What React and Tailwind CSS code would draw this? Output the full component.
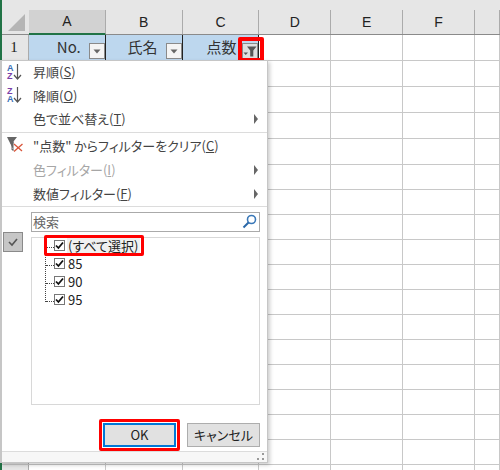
import React from 'react';

const colWidths = ['w-[77px]', 'w-[77px]', 'w-[77px]', 'w-[72px]', 'w-[72px]', 'w-[72px]', 'w-[25px]'];
const colNames = ['A', 'B', 'C', 'D', 'E', 'F', ''];
const rowNums = Array.from({ length: 18 }, (_, i) => i);
const jp = { fontFamily: '"Noto Sans CJK JP", "Liberation Sans", sans-serif' };

function DropArrow({ filtered }) {
    return (
        <svg width="14" height="14" viewBox="0 0 14 14">
            {filtered ? (
                <>
                    <path d="M0.5 8.5h4.5L2.7 11z" fill="#555" />
                    <path d="M4 2.5h9.5l-3.2 4v6H7.2v-6z" fill="#555" />
                </>
            ) : (
                <path d="M3.5 5.5h7L7 9.5z" fill="#666" />
            )}
        </svg>
    );
}

function SortIcon({ top, bottom }) {
    return (
        <div className="relative w-[16px] h-[16px] text-[9px] leading-[8px] font-bold text-[#7a3fa8]" style={{ fontFamily: '"Liberation Sans", sans-serif' }}>
            <div className={`w-[7px] ${top === 'A' ? 'text-[#3a6fb5]' : ''}`}>{top}</div>
            <div className={`w-[7px] ${bottom === 'A' ? 'text-[#3a6fb5]' : ''}`}>{bottom}</div>
            <svg className="absolute left-[6px] top-0" width="9" height="16" viewBox="0 0 9 16">
                <path d="M4.5 0v15M1 11l3.5 4 3.5-4" fill="none" stroke="#555" strokeWidth="1.2" />
            </svg>
        </div>
    );
}

function ClearIcon() {
    return (
        <svg width="17" height="17" viewBox="0 0 17 17" className="overflow-visible">
            <path d="M0 0h10L6.5 4.5V12H5V13H6.5M3.5 4.5L0 0" fill="#666" />
            <path d="M3.5 4.5h3v2h-3z" fill="#666" />
            <path d="M5 6v7h2" fill="none" stroke="#666" strokeWidth="1" />
            <path d="M7 7l8 7M15.5 7l-8.5 7.5" stroke="#d9553a" strokeWidth="1.3" fill="none" />
        </svg>
    );
}

function MenuRow({ icon, children, arrow, disabled, short }) {
    return (
        <div className={`flex items-center ${short ? 'h-[23.5px]' : 'h-[24px]'} ${disabled ? 'text-[#a6a6a6]' : 'text-[#444]'}`}>
            <div className="w-[31px] pl-[5px] shrink-0">{icon}</div>
            <div className="flex-1 text-[13px] whitespace-nowrap">{children}</div>
            {arrow && <div className="w-0 h-0 mr-[9px] border-y-[5px] border-y-transparent border-l-[4px] border-l-[#666]" />}
        </div>
    );
}

function TreeRow({ label, first }) {
    return (
        <div className="flex items-center h-[18px] pl-[22px]">
            <div className="w-[11px] h-[11px] border border-[#777] bg-white flex items-center justify-center shrink-0">
                <svg width="9" height="9" viewBox="0 0 9 9">
                    <path d="M1 4.5l2.4 2.5L8 1.5" fill="none" stroke="#111" strokeWidth="1.8" />
                </svg>
            </div>
            <span className={`ml-[2px] pl-[1px] text-[13px] text-[#222] whitespace-nowrap ${first ? 'bg-[#f0f0f0] pr-[2px]' : ''}`}>{label}</span>
        </div>
    );
}

export default function App() {
    return (
        <div className="relative w-[500px] h-[470px] overflow-hidden bg-white [font-feature-settings:'palt']" style={jp}>
            <div className="h-[10px] bg-[#e6e6e6]" />
            {/* column headers */}
            <div className="flex h-[25px] bg-[#e6e6e6] border-b border-[#8a8a8a]">
                <div className="w-[29px] flex items-end justify-end pr-[4px] pb-[3px]">
                    <div className="w-0 h-0 border-l-[17px] border-l-transparent border-b-[17px] border-b-[#b5b5b5]" />
                </div>
                {colNames.map((name, i) => (
                    <div
                        key={i}
                        className={`${colWidths[i]} flex items-center justify-center text-[14px] text-[#222] border-r border-[#ababab] ${i === 0 ? 'bg-[#d2d2d2] border-b-2 border-b-[#217346] h-[25px] text-[#1d5c3a]' : ''}`}
                        style={{ fontFamily: '"Liberation Sans", sans-serif' }}
                    >
                        {name}
                    </div>
                ))}
            </div>
            {/* sheet rows */}
            {rowNums.map((r) => (
                <div key={r} className={`flex ${r < 5 ? 'h-[26px]' : 'h-[25px]'} border-b border-[#c8c8c8]`}>
                    <div className="w-[29px] flex items-center justify-center bg-[#e6e6e6] border-r border-[#ababab] text-[15px] text-[#222]" style={{ fontFamily: '"Liberation Serif", serif' }}>
                        {r === 0 ? '1' : ''}
                    </div>
                    {r === 0 ? (
                        <>
                            {[['No.', false], ['氏名', false], ['点数', true]].map(([label, filtered]) => (
                                <div key={label} className="w-[77px] flex items-end justify-end pb-[1px] bg-[#bdd7ee] border-r border-[#222] text-[15px] text-[#333]">
                                    <span className={`self-center ${filtered ? 'mr-[6px]' : 'mr-[8px]'}`}>{label}</span>
                                    <div className={`w-[16px] h-[16px] border border-[#8a8a8a] flex items-center justify-center ${filtered ? 'bg-[#dedede]' : 'bg-[#f4f4f4]'}`}>
                                        <DropArrow filtered={filtered} />
                                    </div>
                                </div>
                            ))}
                        </>
                    ) : (
                        colWidths.slice(0, 3).map((w, i) => <div key={i} className={`${w} border-r border-[#c8c8c8]`} />)
                    )}
                    {colWidths.slice(3).map((w, i) => (
                        <div key={i} className={`${w} border-r border-[#c8c8c8]`} />
                    ))}
                </div>
            ))}

            {/* sheet edge */}
            <div className="absolute left-0 top-0 w-[2px] h-full bg-[#217346]" />

            {/* highlight on the filter button */}
            <div className="absolute left-[238px] top-[37px] w-[26px] h-[25px] border-[4px] border-[#f00] rounded-[2px]" />

            {/* filter menu */}
            <div className="absolute left-0 top-[60px] w-[268px] h-[403px] bg-white border border-l-2 border-[#c6c6c6] shadow-[2px_2px_4px_rgba(0,0,0,0.2)] flex flex-col">
                <div className="-mt-[1px]">
                    <MenuRow short icon={<SortIcon top="A" bottom="Z" />}>昇順(<u>S</u>)</MenuRow>
                    <MenuRow short icon={<SortIcon top="Z" bottom="A" />}>降順(<u>O</u>)</MenuRow>
                    <MenuRow short arrow>色で並べ替え(<u>T</u>)</MenuRow>
                </div>
                <div className="h-px bg-[#dcdcdc] my-[1px]" />
                <MenuRow icon={<ClearIcon />}>"点数" からフィルターをクリア(<u>C</u>)</MenuRow>
                <MenuRow arrow disabled>色フィルター(<u>I</u>)</MenuRow>
                <MenuRow arrow>数値フィルター(<u>F</u>)</MenuRow>
                <div className="h-px bg-[#dcdcdc]" />

                <div className="flex mt-[5px]">
                    <div className="w-[29px] shrink-0 relative">
                        <div className="absolute left-[1px] top-[20px] w-[20px] h-[20px] bg-[#c6c6c6] border border-[#8a8a8a] flex items-center justify-center">
                            <svg width="10" height="10" viewBox="0 0 10 10">
                                <path d="M1 5l3 3 5-6" fill="none" stroke="#555" strokeWidth="1.6" />
                            </svg>
                        </div>
                    </div>
                    <div className="flex-1 pr-[7px] flex flex-col">
                        <div className="h-[20px] border border-[#aaa] flex items-center justify-between pl-[1px] pr-[2px] text-[13px] text-[#666]">
                            <span>検索</span>
                            <svg width="15" height="15" viewBox="0 0 15 15">
                                <circle cx="9.5" cy="5.5" r="4" fill="none" stroke="#3a78b8" strokeWidth="1.6" />
                                <path d="M6.5 8.5L1.5 13.5" stroke="#2a68a8" strokeWidth="2" />
                            </svg>
                        </div>
                        <div className="mt-[5px] h-[168px] border border-[#d8d8d8] relative">
                            {/* dotted tree lines */}
                            <div className="absolute left-[13px] top-[9px] h-[55px] border-l border-dotted border-[#444]" />
                            <div className="absolute left-[14px] top-[9px] w-[8px] border-t border-dotted border-[#444]" />
                            <div className="absolute left-[14px] top-[27px] w-[8px] border-t border-dotted border-[#444]" />
                            <div className="absolute left-[14px] top-[45px] w-[8px] border-t border-dotted border-[#444]" />
                            <div className="absolute left-[14px] top-[63px] w-[8px] border-t border-dotted border-[#444]" />
                            <div className="relative -mt-[1px]">
                                <TreeRow label="(すべて選択)" first />
                                <TreeRow label="85" />
                                <TreeRow label="90" />
                                <TreeRow label="95" />
                            </div>
                            <div className="absolute left-[12px] -top-[3px] w-[100px] h-[21px] border-[3px] border-[#f00] rounded-[2px]" />
                        </div>
                        <div className="flex justify-end gap-[11px] mt-[18px]">
                            <div className="relative w-[73px] h-[24px] bg-[#e1e1e1] border-2 border-[#0078d7] flex items-center justify-center text-[13px] text-[#222]">
                                OK
                                <div className="absolute -inset-[6px] border-[3px] border-[#f00] rounded-[2px]" />
                            </div>
                            <div className="w-[73px] h-[24px] bg-[#e1e1e1] border border-[#adadad] flex items-center justify-center text-[13px] text-[#222]">
                                キャンセル
                            </div>
                        </div>
                    </div>
                </div>
                <div className="h-[11px] mt-auto border-t border-[#dcdcdc] bg-[#f7f7f7] flex justify-end items-end pr-[2px] pb-[1px]">
                    <svg width="8" height="8" viewBox="0 0 8 8" fill="#999">
                        <rect x="5" y="0" width="2" height="2" />
                        <rect x="0" y="5" width="2" height="2" />
                        <rect x="5" y="5" width="2" height="2" />
                    </svg>
                </div>
            </div>
        </div>
    );
}
